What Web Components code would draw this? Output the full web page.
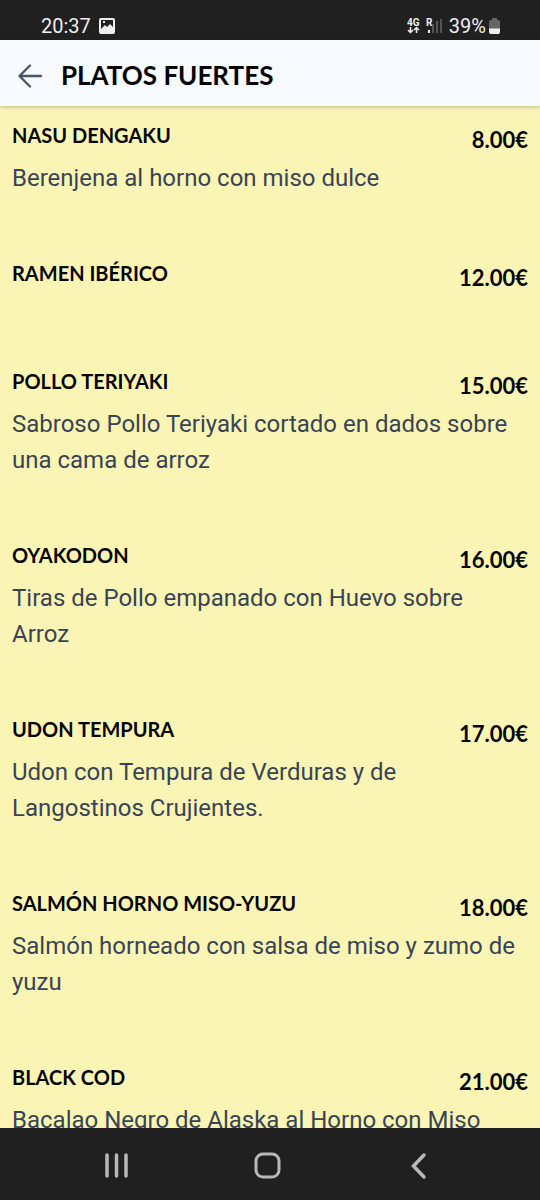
<!DOCTYPE html>
<html lang="es">
<head>
<meta charset="utf-8">
<meta name="viewport" content="width=device-width, initial-scale=1">
<title>Platos fuertes</title>
<style>
html,body{margin:0;height:100%;background:#202020}
</style>
</head>
<body>
<menu-screen>
  <status-bar slot="status"></status-bar>
  <page-header slot="header">PLATOS FUERTES</page-header>
  <menu-dish name="NASU DENGAKU" price="8.00€">Berenjena al horno con miso dulce</menu-dish>
  <menu-dish name="RAMEN IBÉRICO" price="12.00€"></menu-dish>
  <menu-dish name="POLLO TERIYAKI" price="15.00€">Sabroso Pollo Teriyaki cortado en dados sobre una cama de arroz</menu-dish>
  <menu-dish name="OYAKODON" price="16.00€">Tiras de Pollo empanado con Huevo sobre Arroz</menu-dish>
  <menu-dish name="UDON TEMPURA" price="17.00€">Udon con Tempura de Verduras y de Langostinos Crujientes.</menu-dish>
  <menu-dish name="SALMÓN HORNO MISO-YUZU" price="18.00€">Salmón horneado con salsa de miso y zumo de yuzu</menu-dish>
  <menu-dish name="BLACK COD" price="21.00€">Bacalao Negro de Alaska al Horno con Miso</menu-dish>
  <system-nav slot="nav"></system-nav>
</menu-screen>

<script>
class BaseElement extends HTMLElement {
  constructor() {
    super();
    this.attachShadow({ mode: 'open' }).innerHTML = this.constructor.markup;
  }
}

customElements.define('menu-screen', class extends BaseElement {
  static markup = `
    <style>
      :host{display:flex;flex-direction:column;height:100vh;font-family:Roboto,sans-serif;background:#202020}
      main{flex:1;min-height:0;overflow:hidden;background:#fbf5b5}
    </style>
    <slot name="status"></slot>
    <slot name="header"></slot>
    <main><slot></slot></main>
    <slot name="nav"></slot>`;
});

customElements.define('status-bar', class extends BaseElement {
  static markup = `
    <style>
      :host{display:flex;align-items:center;justify-content:space-between;box-sizing:border-box;height:40px;padding:11px 40px 0 41px;background:#202020;color:#eee;font-size:20px;line-height:28px}
      div{display:flex;align-items:center}
      .left{gap:8px}
      svg{display:block}
      .net{margin-right:6px}
      .bat{margin-left:3px}
    </style>
    <div class="left">
      <span>20:37</span>
      <svg width="16" height="16" viewBox="0 0 16 16"><path fill="#eee" fill-rule="evenodd" d="M2 0H14Q16 0 16 2V14Q16 16 14 16H2Q0 16 0 14V2Q0 0 2 0ZM2 2V11L6 7L8 9L11 6L14 9V2ZM4 3H6V5H4Z"/></svg>
    </div>
    <div>
      <svg class="net" width="36" height="18" viewBox="0 0 36 18">
        <text x="0" y="9" font-family="Roboto,sans-serif" font-weight="700" font-size="10" fill="#eee">4G</text>
        <text x="19" y="9" font-family="Roboto,sans-serif" font-weight="700" font-size="10" fill="#eee">R</text>
        <path d="M3.500 10V15M1 13L3.500 15.500L6 13M9.500 16V11M7 13L9.500 10.500L12 13" fill="none" stroke="#eee" stroke-width="1.500"/>
        <path d="M22 13V16" stroke="#eee" stroke-width="2"/>
        <path d="M26 7V16M30 4V16M34 2V16" stroke="#666" stroke-width="1.500"/>
      </svg>
      <span>39%</span>
      <svg class="bat" width="11" height="16" viewBox="0 0 11 16"><path d="M3 0H8V2H9Q11 2 11 4V11H0V4Q0 2 2 2H3Z" fill="#666"/><path d="M0 10.500H11V14Q11 16 9 16H2Q0 16 0 14Z" fill="#eee"/></svg>
    </div>`;
});

customElements.define('page-header', class extends BaseElement {
  static markup = `
    <style>
      :host{display:flex;align-items:center;gap:18px;box-sizing:border-box;height:66px;padding:4px 18px 0;background:#f7fafe;box-shadow:0 1px 4px rgba(0,0,0,.25);position:relative}
      button{border:0;background:none;padding:0;margin:0;display:block}
      svg{display:block}
      h1{margin:0;font:700 26px/36px Lato,sans-serif;color:#050505}
    </style>
    <button type="button" aria-label="Volver"><svg width="25" height="26" viewBox="0 0 25 26" fill="none" stroke="#4a5568" stroke-width="2.300" stroke-linecap="round" stroke-linejoin="round"><path d="M23 14H1.500M12 3.500L1.500 14L12 24.500"/></svg></button>
    <h1><slot></slot></h1>`;
});

customElements.define('menu-dish', class extends BaseElement {
  static markup = `
    <style>
      :host{display:block;box-sizing:border-box;min-height:108px;padding:12px 12px 48px}
      header{display:flex;justify-content:space-between;height:42px;font-family:Lato,sans-serif;font-weight:700;color:#050505}
      h2{margin:0;font-size:20px;font-weight:700;line-height:34px}
      .price{font-size:22px;line-height:44px}
      p{margin:0;padding-right:8px;font:400 24px/36px Roboto,sans-serif;color:#384454}
    </style>
    <header><h2></h2><span class="price"></span></header>
    <p><slot></slot></p>`;
  connectedCallback() {
    this.shadowRoot.querySelector('h2').textContent = this.getAttribute('name');
    this.shadowRoot.querySelector('.price').textContent = this.getAttribute('price');
  }
});

customElements.define('system-nav', class extends BaseElement {
  static markup = `
    <style>
      :host{display:flex;align-items:center;justify-content:center;gap:124px;height:72px;padding:4px 4px 0 0;box-sizing:border-box;background:#202020}
      button{border:0;background:none;padding:0;margin:0}
      svg{display:block}
    </style>
    <button type="button" aria-label="Recientes"><svg width="28" height="28" viewBox="0 0 28 28" fill="none" stroke="#b8b8b8" stroke-width="3.500" stroke-linecap="round"><path d="M5 3V24M14.500 3V24M24 3V24"/></svg></button>
    <button type="button" aria-label="Inicio"><svg width="28" height="28" viewBox="0 0 28 28" fill="none" stroke="#b8b8b8" stroke-width="3"><rect x="2" y="2" width="23" height="23" rx="7"/></svg></button>
    <button type="button" aria-label="Atrás"><svg width="28" height="28" viewBox="0 0 28 28" fill="none" stroke="#b8b8b8" stroke-width="3.500" stroke-linecap="round"><path d="M18 3L7.500 14L18 25"/></svg></button>`;
});
</script>
</body>
</html>
